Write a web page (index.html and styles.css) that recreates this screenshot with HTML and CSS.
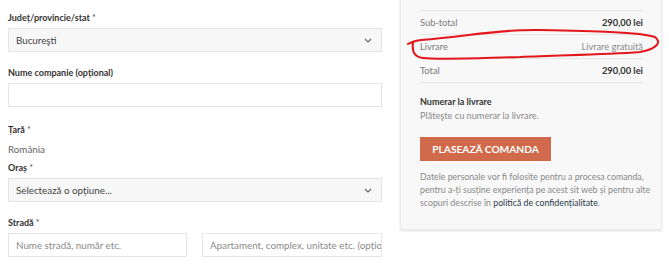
FILE: index.html
```html
<!DOCTYPE html>
<html lang="ro">
<head>
    <meta charset="UTF-8">
    <title>Finalizare comandă</title>
    <link rel="stylesheet" href="styles.css">
</head>
<body>
<div class="page">

<div class="billing">
    <label class="field-label first">Județ/provincie/stat <span class="req">*</span></label>
    <div class="select-box">
        <span>Bucureşti</span>
        <svg class="chevron" width="8" height="5" viewBox="0 0 8 5"><path d="M1 1 L4 4 L7 1" fill="none" stroke="#666" stroke-width="1.1"/></svg>
    </div>

    <label class="field-label">Nume companie (opțional)</label>
    <div class="text-input"></div>

    <label class="field-label tara">Țară <span class="req">*</span></label>
    <p class="static-value">România</p>

    <label class="field-label oras">Oraș <span class="req">*</span></label>
    <div class="select-box">
        <span>Selectează o opțiune...</span>
        <svg class="chevron" width="8" height="5" viewBox="0 0 8 5"><path d="M1 1 L4 4 L7 1" fill="none" stroke="#666" stroke-width="1.1"/></svg>
    </div>

    <label class="field-label">Stradă <span class="req">*</span></label>
    <div class="street-row">
        <div class="text-input street"><span class="placeholder">Nume stradă, număr etc.</span></div>
        <div class="text-input apt"><span class="placeholder">Apartament, complex, unitate etc. (opțional)</span></div>
    </div>
</div>

<div class="order">
    <div class="order-panel">
        <table class="totals">
            <tr class="item-row">
                <td>Ceas inteligent × 1</td>
                <td class="amount">290,00 lei</td>
            </tr>
            <tr>
                <th>Sub-total</th>
                <td class="amount">290,00 lei</td>
            </tr>
            <tr>
                <th>Livrare</th>
                <td class="free">Livrare gratuită</td>
            </tr>
            <tr class="total-row">
                <th>Total</th>
                <td class="amount">290,00 lei</td>
            </tr>
        </table>

        <h4 class="pay-title">Numerar la livrare</h4>
        <p class="pay-desc">Plăteşte cu numerar la livrare.</p>

        <button class="place-order">PLASEAZĂ COMANDA</button>

        <p class="privacy">Datele personale vor fi folosite pentru a procesa comanda,<br>pentru a-ți susține experiența pe acest sit web și pentru alte<br>scopuri descrise în <a href="#">politică de confidențialitate</a>.</p>
    </div>
</div>

<svg class="scribble" width="669" height="272" viewBox="0 0 669 272">
    <path d="M408 44 C411 42 415 41 421 40 C470 36 500 29 540 30 C590 31 640 32 655 37 C662 42 657 49 640 52 C600 55 560 55 520 57 C480 58 440 60 423 58 C413 57 412 50 413 42" fill="none" stroke="#e3161c" stroke-width="2.1" stroke-linecap="round" stroke-linejoin="round"/>
</svg>

</div>
</body>
</html>
```

FILE: styles.css
```css
body {
    margin: 0;
    background: #fff;
    font-family: Lato, "Open Sans", Arial, sans-serif;
    color: #333;
}

.page {
    position: relative;
    display: flex;
    align-items: flex-start;
    width: 669px;
    height: 272px;
    overflow: hidden;
}

/* left column - billing fields */
.billing {
    width: 374px;
    padding: 11px 0 0 8px;
}

.field-label {
    display: block;
    font-size: 9px;
    font-weight: bold;
    line-height: 14px;
    color: #333;
    margin: 14px 0 3px;
}

.field-label.first {
    margin-top: 0;
}

.field-label.tara {
    margin-top: 16px;
    margin-bottom: 5px;
}

.field-label.oras {
    margin-top: 5px;
}

.req {
    font-weight: normal;
    color: #555;
}

.select-box, .text-input {
    box-sizing: border-box;
    height: 24px;
    border: 1px solid #e4e4e4;
    display: flex;
    align-items: center;
    padding: 0 7px;
    font-size: 9.8px;
    color: #444;
}

.select-box {
    background: #f7f7f7;
    justify-content: space-between;
}

.chevron {
    margin-right: 2px;
}

.text-input {
    background: #fff;
    overflow: hidden;
    white-space: nowrap;
}

.placeholder {
    color: #8a8a8a;
}

.static-value {
    margin: 0;
    font-size: 9.8px;
    line-height: 14px;
    color: #666;
}

.street-row {
    display: flex;
    gap: 15px;
}

.street {
    width: 179px;
}

.apt {
    flex: 1;
}

/* right column - order review */
.order {
    margin-left: 18px;
    margin-top: -14px;
}

.order-panel {
    width: 262px;
    box-sizing: border-box;
    padding: 0 18px 20px 19px;
    background: #f8f8f8;
    border: 1px solid #ececec;
    box-shadow: 0 1px 2px rgba(0,0,0,0.12);
}

.totals {
    width: 100%;
    border-collapse: collapse;
    font-size: 9.3px;
}

.totals th, .totals td {
    height: 23px;
    padding: 0;
    border-top: 1px solid #e6e6e6;
    text-align: left;
    font-weight: normal;
    color: #7a7a7a;
}

.totals .item-row td {
    border-top: none;
    vertical-align: top;
    line-height: 14px;
    color: #777;
}

.totals .amount {
    text-align: right;
    font-weight: bold;
    color: #333;
}

.totals .free {
    text-align: right;
    color: #8a8a8a;
}

.totals .total-row th, .totals .total-row td {
    border-bottom: 1px solid #e6e6e6;
}

.pay-title {
    margin: 12px 0 0;
    font-size: 9px;
    line-height: 14px;
    color: #333;
}

.pay-desc {
    margin: 0;
    font-size: 9.2px;
    line-height: 14px;
    color: #8a8a8a;
}

.place-order {
    margin-top: 14px;
    width: 131px;
    height: 24px;
    padding: 0;
    border: none;
    background: #d16a4b;
    color: #fff;
    font-family: inherit;
    font-size: 10.2px;
    font-weight: bold;
}

.privacy {
    margin: 9px 0 0;
    font-size: 8.8px;
    line-height: 13px;
    color: #888;
    white-space: nowrap;
}

.privacy a {
    color: #2a3a4a;
    text-decoration: none;
}

.scribble {
    position: absolute;
    top: 0;
    left: 0;
    pointer-events: none;
}
```
